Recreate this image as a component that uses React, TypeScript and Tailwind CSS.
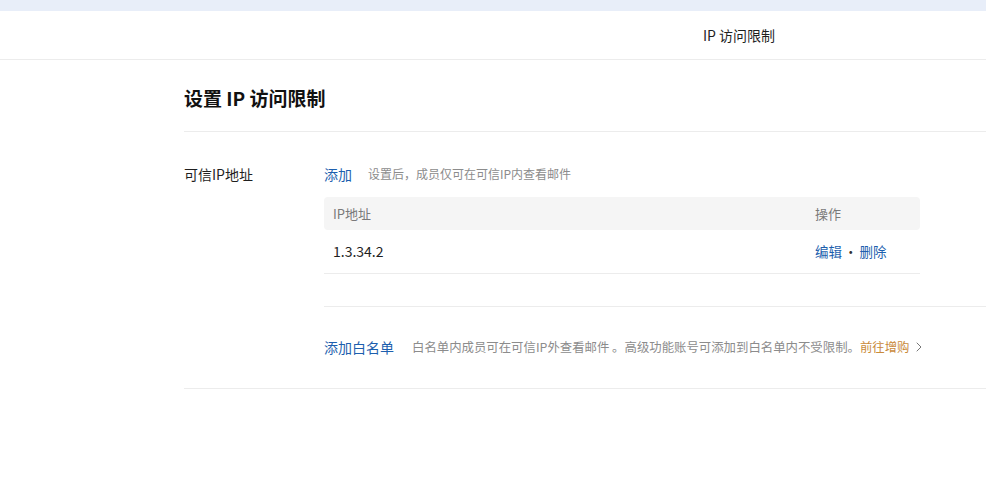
import { ChevronRight } from 'lucide-react'

const font = { fontFamily: '"Microsoft YaHei", "Noto Sans CJK SC", sans-serif' }

export default function App() {
  return (
    <div className="min-h-[495px] w-[986px] bg-white text-[#1f1f1f]" style={font}>
      <div className="h-[11px] bg-[#e8eef9]" />
      <div className="flex h-[49px] items-center border-b border-[#ececec] pl-[703px] text-[14px] text-[#1f1f1f]">
        IP 访问限制
      </div>

      <div className="pl-[184px]">
        <div className="flex h-[72px] items-center border-b border-[#ececec] pt-[6px]">
          <h1 className="text-[19px] font-bold text-[#111]">设置 IP 访问限制</h1>
        </div>

        <div className="border-b border-[#ececec]">
          <div className="flex pt-[30px]">
            <div className="w-[140px] text-[14px] leading-[24px]">可信IP地址</div>
            <div className="flex-1">
              <div className="flex items-center gap-[16px] leading-[24px]">
                <span className="text-[14px] text-[#1d5fae]">添加</span>
                <span className="text-[12px] text-[#8c8c8c]">设置后，成员仅可在可信IP内查看邮件</span>
              </div>
              <div className="mt-[11px] w-[596px]">
                <div className="flex h-[33px] items-center rounded-[4px] bg-[#f5f5f5] px-[9px] text-[13px] text-[#7a7a7a]">
                  <span className="flex-1">IP地址</span>
                  <span className="w-[96px]">操作</span>
                </div>
                <div className="flex h-[44px] items-center border-b border-[#ececec] px-[9px] text-[14px]">
                  <span className="flex-1">1.3.34.2</span>
                  <span className="flex w-[96px] items-center text-[13.5px] text-[#1d5fae]">
                    编辑
                    <span className="mx-[2px] text-[#333]">·</span>
                    删除
                  </span>
                </div>
              </div>
              <div className="mt-[32px] border-t border-[#ececec]">
                <div className="flex h-[81px] items-center">
                  <span className="text-[14px] text-[#1d5fae]">添加白名单</span>
                  <span className="ml-[18px] text-[12.4px] text-[#8c8c8c]">
                    白名单内成员可在可信IP外查看邮件 。高级功能账号可添加到白名单内不受限制。
                  </span>
                  <span className="flex items-center text-[12.4px] text-[#c98a3a]">
                    前往增购
                    <ChevronRight className="ml-[2px] h-[16px] w-[16px] text-[#777]" strokeWidth={1.5} />
                  </span>
                </div>
              </div>
            </div>
          </div>
        </div>
      </div>
    </div>
  )
}
